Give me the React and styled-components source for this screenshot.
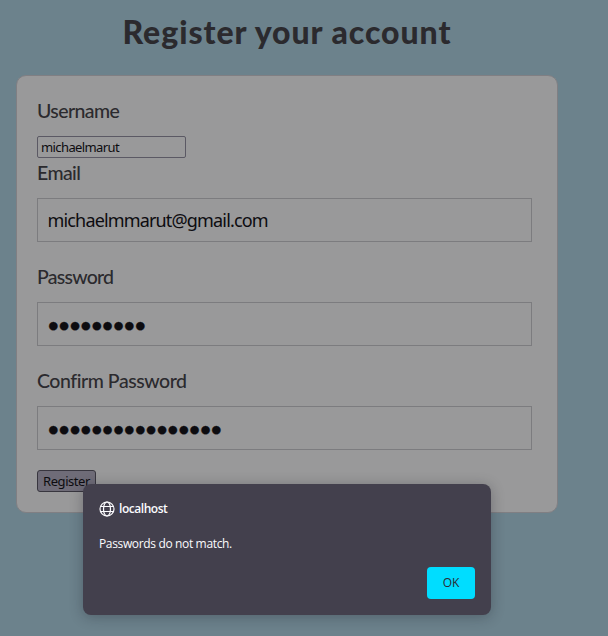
import React from "react";
import styled, { createGlobalStyle } from "styled-components";

const GlobalStyle = createGlobalStyle`
  * { box-sizing: border-box; }
  body { margin: 0; background: #6c828c; overflow: hidden; }
`;

const Page = styled.main`
  position: relative;
  width: 608px;
  height: 636px;
  padding: 0 50px 0 16px;
  background: #6c828c;
  color: #2b2a2e;
  font-family: "Gill Sans", "Gill Sans MT", Lato, sans-serif;
`;

const Title = styled.h1`
  margin: 0;
  height: 75px;
  padding-top: 12px;
  font-size: 32px;
  line-height: 40px;
  font-weight: 900;
  text-align: center;
  white-space: nowrap;
  letter-spacing: 0.95px;
`;

const Card = styled.div`
  display: flex;
  flex-direction: column;
  align-items: flex-start;
  height: 438px;
  padding: 23px 25px 0 20px;
  border: 1px solid #807f83;
  border-radius: 10px;
  background: #99999a;
`;

const Label = styled.label`
  height: 24px;
  font-size: 19.5px;
  line-height: 24px;
  font-weight: 500;
  white-space: nowrap;
  letter-spacing: ${(p) => p.$spacing || "-0.6px"};
`;

const SmallField = styled.div`
  width: 149px;
  height: 22px;
  margin: 13px 0 3px;
  padding: 0 3px;
  border: 1px solid #5b5964;
  border-radius: 2px;
  color: #0d0c10;
  font: 13px/20px "Noto Sans", sans-serif;
  letter-spacing: -0.6px;
`;

const Field = styled.div`
  width: 495px;
  height: 44px;
  margin: 13px 0 23px;
  padding: 0 9.5px;
  border: 1px solid #7c7c7f;
  color: #0d0c10;
  font: 18px/43px "Noto Sans", sans-serif;
  letter-spacing: -0.84px;
`;

const Dots = styled.span`
  display: block;
  font: 11px/45px "DejaVu Sans", sans-serif;
  letter-spacing: 1.27px;
  padding-left: 1px;
  -webkit-text-stroke: 0.3px #0d0c10;
`;

const SubmitButton = styled.button`
  width: 59px;
  height: 22px;
  margin-top: -3px;
  padding: 0;
  border: 1px solid #38363f;
  border-radius: 3px;
  background: #6f6c78;
  color: #0d0c10;
  font: 13px/20px "Noto Sans", sans-serif;
  letter-spacing: -0.45px;
`;

const Dialog = styled.section`
  position: absolute;
  left: 83px;
  top: 484px;
  display: flex;
  flex-direction: column;
  width: 408px;
  height: 131px;
  padding: 16px;
  border-radius: 8px;
  background: #43404d;
  color: #fbfbfe;
  box-shadow: 0 2px 14px rgba(20, 20, 30, 0.3);
  font: 12px/18px "Open Sans", sans-serif;
`;

const Origin = styled.header`
  display: flex;
  align-items: center;
  gap: 4px;
  height: 17px;
  font-weight: 600;
  letter-spacing: -0.45px;
`;

const Message = styled.p`
  margin: 18px 0 14px;
  height: 18px;
  letter-spacing: -0.35px;
`;

const OkButton = styled.button`
  align-self: flex-end;
  width: 48px;
  height: 32px;
  padding: 0;
  border: 0;
  border-radius: 4px;
  background: #00ddff;
  color: #2b2a33;
  font: 12px/32px "Open Sans", sans-serif;
`;

const GlobeIcon = () => (
  <svg width="16" height="16" viewBox="0 0 16 16" fill="none" stroke="currentColor" strokeWidth="1.2">
    <circle cx="8" cy="8" r="7" />
    <ellipse cx="8" cy="8" rx="3.5" ry="7" />
    <path d="M1.5 5.5h13M1.5 10.5h13" />
  </svg>
);

export default function App() {
  return (
    <>
      <GlobalStyle />
      <Page>
        <Title>Register your account</Title>
        <Card>
          <Label>Username</Label>
          <SmallField>michaelmarut</SmallField>
          <Label>Email</Label>
          <Field>michaelmmarut@gmail.com</Field>
          <Label $spacing="-0.75px">Password</Label>
          <Field><Dots>{"●".repeat(9)}</Dots></Field>
          <Label $spacing="-0.45px">Confirm Password</Label>
          <Field><Dots>{"●".repeat(16)}</Dots></Field>
          <SubmitButton>Register</SubmitButton>
        </Card>
        <Dialog role="alertdialog">
          <Origin><GlobeIcon />localhost</Origin>
          <Message>Passwords do not match.</Message>
          <OkButton>OK</OkButton>
        </Dialog>
      </Page>
    </>
  );
}
